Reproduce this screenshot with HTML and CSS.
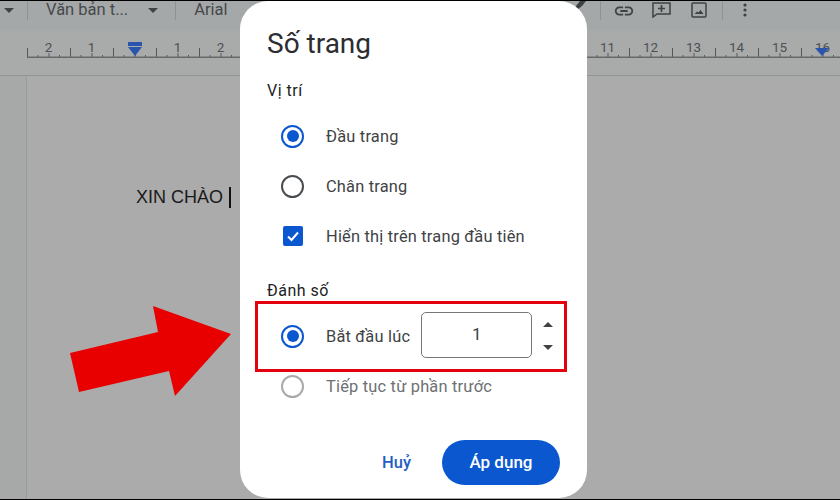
FILE: index.html
```html
<!DOCTYPE html>
<html>
    <head>
        <title>Số trang</title>
        <link rel="stylesheet" href="styles.css">
    </head>
    <body>
        <div id="screen">
            <div id="toolbar">
                <span class="caret first"></span>
                <span class="sep"></span>
                <span class="tool-text style-name">Văn bản t...</span>
                <span class="caret"></span>
                <span class="sep second"></span>
                <span class="tool-text">Arial</span>
                <span class="tool-icons">
                    <svg class="pen" width="12" height="9" viewBox="0 0 12 9"><path d="M0 9 L2 5 L6 0 L12 0 L8 5 L3 9 Z" fill="#3f4244"/></svg>
                    <span class="sep third"></span>
                    <svg class="icon-link" width="22" height="22" viewBox="0 0 24 24"><path d="M3.900 12c0-1.700 1.400-3.100 3.100-3.100h4V7H7c-2.800 0-5 2.200-5 5s2.200 5 5 5h4v-1.900H7c-1.700 0-3.100-1.400-3.100-3.100zM8 13h8v-2H8v2zm9-6h-4v1.900h4c1.700 0 3.100 1.400 3.100 3.100s-1.400 3.100-3.100 3.100h-4V17h4c2.800 0 5-2.200 5-5s-2.200-5-5-5z" fill="#3f4244"/></svg>
                    <svg class="icon-comment" width="19" height="16" viewBox="0 0 19 16"><path d="M1 1 H18 V12 H5 L1 15 Z" fill="none" stroke="#3f4244" stroke-width="1.500"/><path d="M9.500 3 V10 M6 6.500 H13" stroke="#3f4244" stroke-width="1.700"/></svg>
                    <svg class="icon-image" width="16" height="16" viewBox="0 0 16 16"><rect x="1" y="1" width="14" height="14" rx="1" fill="none" stroke="#3f4244" stroke-width="1.500"/><path d="M3.500 12 L6 9.500 L7.500 10.500 L9.500 8 L12.500 12 Z" fill="#3f4244"/></svg>
                    <span class="sep fourth"></span>
                    <svg class="icon-more" width="4" height="14" viewBox="0 0 4 14"><circle cx="2" cy="2" r="1.600" fill="#3f4244"/><circle cx="2" cy="7" r="1.600" fill="#3f4244"/><circle cx="2" cy="12" r="1.600" fill="#3f4244"/></svg>
                </span>
            </div>
            <div id="ruler">
                <div class="numbers">
                    <span>2</span><span>1</span><span></span>
                    <span>1</span><span>2</span>
                    <span class="hidden-part"></span>
                    <span>11</span><span>12</span><span>13</span><span>14</span><span>15</span><span>16</span>
                </div>
                <svg class="ticks" width="813" height="16">
                    <defs>
                        <pattern id="tick" width="43" height="16" patternUnits="userSpaceOnUse">
                            <path d="M0.500 6 V16 M11 13 V16 M22 11 V16 M32.500 13 V16" stroke="#55585a" stroke-width="1"/>
                        </pattern>
                    </defs>
                    <rect width="813" height="16" fill="url(#tick)"/>
                    <rect y="14.500" width="813" height="1.500" fill="#66696a"/>
                </svg>
                <svg class="marker left" width="16" height="15" viewBox="0 0 16 15"><rect x="1" y="0" width="14" height="4" fill="#2a55ad"/><path d="M1 5 H15 L8 14 Z" fill="#2a55ad"/></svg>
                <svg class="marker right" width="14" height="8" viewBox="0 0 14 8"><path d="M0 0 H14 L7 8 Z" fill="#2a55ad"/></svg>
            </div>
            <div id="doc-area">
                <div id="page">
                    <div class="doc-line">XIN CHÀO <span class="cursor"></span></div>
                </div>
            </div>
        </div>

        <div id="dialog">
            <h1>Số trang</h1>
            <div class="section-label">Vị trí</div>
            <div class="options">
                <div class="row">
                    <span class="radio on"></span>
                    <span class="label">Đầu trang</span>
                </div>
                <div class="row">
                    <span class="radio"></span>
                    <span class="label">Chân trang</span>
                </div>
                <div class="row">
                    <span class="checkbox">
                        <svg width="20" height="20" viewBox="0 0 20 20"><path d="M5 10.500 L8.500 14 L15 6.500" fill="none" stroke="#fff" stroke-width="2"/></svg>
                    </span>
                    <span class="label">Hiển thị trên trang đầu tiên</span>
                </div>
            </div>
            <div class="section-label second">Đánh số</div>
            <div class="options">
                <div class="row">
                    <span class="radio on"></span>
                    <span class="label">Bắt đầu lúc</span>
                    <span class="number-box">1</span>
                    <span class="stepper">
                        <span class="up"></span>
                        <span class="down"></span>
                    </span>
                </div>
                <div class="row disabled">
                    <span class="radio"></span>
                    <span class="label">Tiếp tục từ phần trước</span>
                </div>
            </div>
            <div class="actions">
                <span class="cancel">Huỷ</span>
                <span class="apply">Áp dụng</span>
            </div>
        </div>

        <div id="highlight"></div>
        <svg id="arrow" width="840" height="500" viewBox="0 0 840 500">
            <polygon points="70,353 158,332 153,306 231,334 175,396 169,371 79,392" fill="#e80000"/>
        </svg>
    </body>
</html>
```

FILE: styles.css
```css
*{
    box-sizing: border-box;
}
html, body{
    margin: 0;
    width: 840px;
    height: 500px;
    overflow: hidden;
    background: #000;
}
body{
    position: relative;
    font-family: Roboto, "Noto Sans", sans-serif;
}
#screen{
    height: 498px;
    margin-top: 1px;
    display: flex;
    flex-direction: column;
    background: #a9aaaa;
}
#toolbar{
    height: 29px;
    padding-bottom: 10px;
    background: #a5a8a9;
    display: flex;
    align-items: center;
    color: #45484a;
    flex-shrink: 0;
}
.tool-text{
    font-size: 16.500px;
    line-height: 19px;
    margin-top: -3px;
}
.style-name{
    margin-left: 18px;
}
.caret{
    width: 0;
    height: 0;
    border-left: 5px solid transparent;
    border-right: 5px solid transparent;
    border-top: 5px solid #3f4244;
    margin-left: 20px;
}
.caret.first{
    margin-left: 4px;
}
.sep{
    width: 1px;
    height: 19px;
    margin-left: 13px;
    background: #8f9293;
}
.sep.second{
    margin-left: 17px;
    margin-right: 18px;
}
.tool-icons{
    margin-left: auto;
    display: flex;
    align-items: center;
    padding-right: 93px;
}
.pen{
    margin-top: -11px;
}
.sep.third{
    margin-left: 14px;
    margin-right: 12px;
}
.icon-comment{
    margin-left: 17px;
    margin-top: -1px;
}
.icon-image{
    margin-left: 20px;
    margin-top: -1px;
}
.sep.fourth{
    margin-left: 15px;
    margin-right: 20px;
}
.icon-more{
    margin-top: -1px;
}
#ruler{
    position: relative;
    height: 46px;
    background: #a9aaaa;
    border-bottom: 1px solid #929495;
    flex-shrink: 0;
}
.numbers{
    display: flex;
    padding-left: 27px;
    padding-top: 10px;
    font-size: 13.500px;
    line-height: 14px;
    color: #4e5153;
}
.numbers span{
    width: 43px;
    text-align: center;
    flex-shrink: 0;
}
.numbers .hidden-part{
    width: 344px;
}
.ticks{
    position: absolute;
    left: 27px;
    top: 12px;
}
.marker{
    position: absolute;
}
.marker.left{
    left: 127px;
    top: 12px;
}
.marker.right{
    left: 815px;
    top: 18px;
}
#doc-area{
    flex: 1;
    padding-left: 26px;
    background: #a7a8a8;
}
#page{
    height: 100%;
    background: #ababab;
    border-left: 1px solid #9a9b9b;
    padding-left: 109px;
    padding-top: 110px;
}
.doc-line{
    font-family: "Liberation Sans", Arial, sans-serif;
    font-size: 18px;
    line-height: 22px;
    color: #1a1a1a;
    display: flex;
    align-items: center;
    gap: 6px;
}
.cursor{
    width: 2px;
    height: 21px;
    background: #111;
}
#dialog{
    position: absolute;
    left: 240px;
    top: 1px;
    width: 347px;
    height: 497px;
    background: #fff;
    border-radius: 28px;
    padding: 26px 0 0 27px;
    color: #3c4043;
}
h1{
    margin: 0;
    font-size: 28px;
    line-height: 34px;
    font-weight: 400;
    color: #2b2d30;
}
.section-label{
    margin-top: 20px;
    font-size: 16px;
    letter-spacing: 0.5px;
    line-height: 20px;
    font-weight: 400;
    color: #202124;
}
.section-label.second{
    margin-top: 20px;
}
.options{
    margin-top: 10px;
}
.row{
    display: flex;
    align-items: center;
    height: 50px;
    padding-left: 14px;
}
.row .label{
    font-size: 16.400px;
    letter-spacing: 0.2px;
    margin-left: 22px;
    color: #3f4245;
}
.radio{
    width: 23px;
    height: 23px;
    border: 2.500px solid #4a4d50;
    border-radius: 50%;
    flex-shrink: 0;
    display: flex;
    align-items: center;
    justify-content: center;
}
.radio.on{
    border-color: #0b57d0;
}
.radio.on::after{
    content: "";
    width: 12px;
    height: 12px;
    border-radius: 50%;
    background: #0b57d0;
}
.checkbox{
    width: 20px;
    height: 20px;
    margin: 0 1.500px;
    background: #0b57d0;
    border-radius: 2px;
    flex-shrink: 0;
    display: flex;
}
.number-box{
    width: 111px;
    height: 46px;
    margin-left: 11px;
    margin-top: -3px;
    border: 1px solid #75787b;
    border-radius: 5px;
    text-align: center;
    font-size: 17px;
    line-height: 42px;
    color: #3f4245;
}
.stepper{
    display: flex;
    flex-direction: column;
    gap: 18px;
    margin-left: 11px;
}
.up, .down{
    width: 0;
    height: 0;
    border-left: 5px solid transparent;
    border-right: 5px solid transparent;
}
.up{
    border-bottom: 5px solid #3f4244;
}
.down{
    border-top: 5px solid #3f4244;
}
.disabled .radio{
    border-color: #a8a9aa;
}
.disabled .label{
    color: #6d7073;
}
.actions{
    display: flex;
    align-items: center;
    justify-content: flex-end;
    margin-top: 29px;
    padding-right: 27px;
}
.cancel{
    color: #1f5fc4;
    font-size: 16.500px;
    font-weight: 500;
    margin-right: 31px;
}
.apply{
    width: 118px;
    height: 45px;
    border-radius: 23px;
    background: #0b57d0;
    color: #fff;
    font-size: 17px;
    font-weight: 500;
    text-align: center;
    line-height: 44px;
}
#highlight{
    position: absolute;
    left: 255px;
    top: 301px;
    width: 312px;
    height: 71px;
    border: 3px solid #e4000f;
}
#arrow{
    position: absolute;
    left: 0;
    top: 0;
}
```
